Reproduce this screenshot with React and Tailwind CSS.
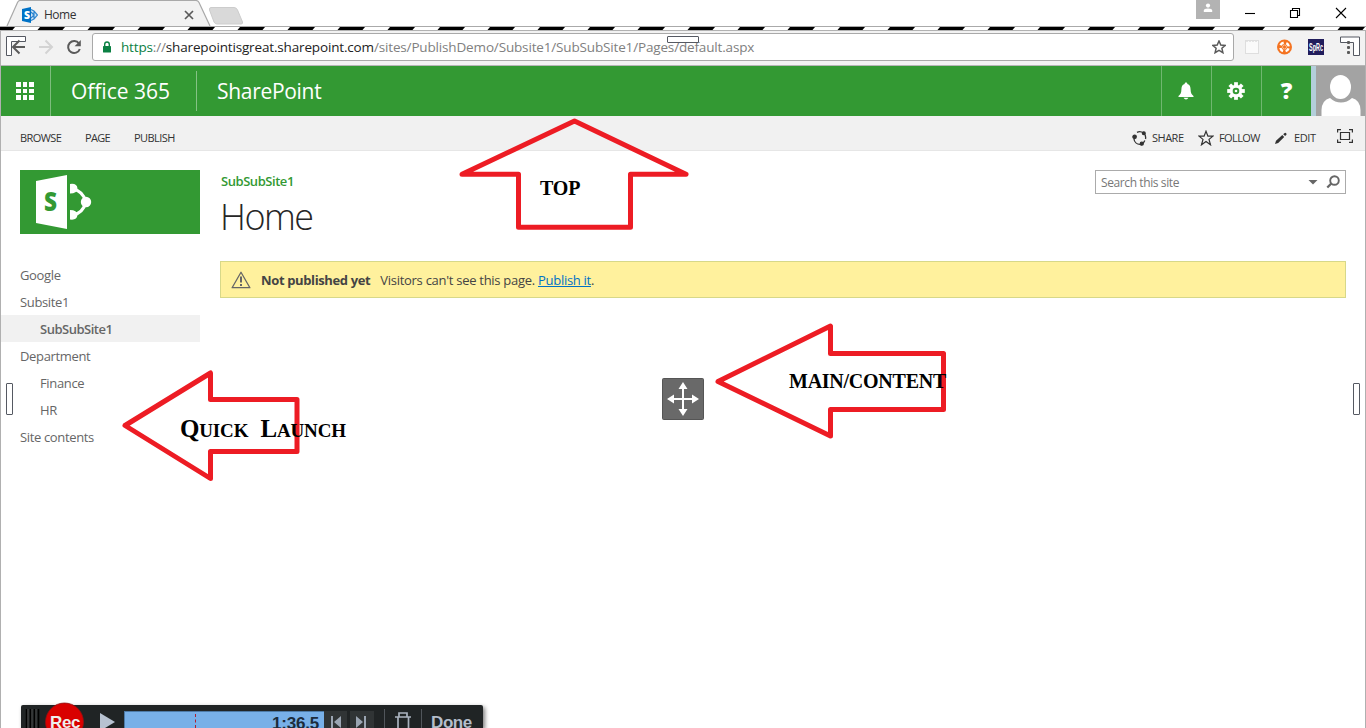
import React from "react";

const SMALLCAPS = "font-['Liberation_Serif',serif] font-bold text-black whitespace-nowrap";

function SharePointFavicon() {
  return (
    <svg className="h-4 w-4 shrink-0" viewBox="0 0 16 16">
      <path d="M8.5 2.5 L15.5 8 L8.5 13.5 Z" fill="#cfe4f5" />
      <path d="M9 2.5 L12 4 L15.5 8 L12 12 L9 13.5 M9 5 L12 8 L9 11 M12 4 V12" stroke="#2f86cf" strokeWidth="1.2" fill="none" />
      <path d="M0 2 L9 0 V16 L0 14 Z" fill="#0072c6" />
      <text x="2" y="12" fontFamily="Open Sans, sans-serif" fontSize="10.5" fontWeight="800" fill="#fff">S</text>
    </svg>
  );
}

function TabStrip() {
  return (
    <div className="relative flex h-[26px] items-start bg-white">
      <svg className="absolute left-0 top-0 h-[26px] w-[250px]" viewBox="0 0 250 26">
        <path d="M7 26 L17.5 2.5 Q18.5 .5 20 .5 H196 Q198 .5 199 2.5 L210 26" fill="#f2f2f2" stroke="#a9a9a9" strokeWidth="1.2" />
        <path d="M211 7.5 H234 Q236.500 7.500 237.500 10 L242.500 22 Q243 24 241 24 H217 Q215 24 214 22 L209.500 10 Q209 7.500 211 7.500Z" fill="#d9d9d9" stroke="#cccccc" strokeWidth="1" />
      </svg>
      <div className="relative flex h-[26px] w-[210px] items-center pl-[22px] pt-[4px]">
        <SharePointFavicon />
        <span className="ml-[6px] text-[12px] leading-4 tracking-[-0.5px] text-[#333]">Home</span>
        <svg className="ml-auto mr-[16px] h-[10px] w-[10px]" viewBox="0 0 10 10">
          <path d="M1 1 L9 9 M9 1 L1 9" stroke="#5a5a5a" strokeWidth="1.7" />
        </svg>
      </div>
      <div className="ml-auto flex items-start">
        <div className="flex h-[19px] w-6 justify-center bg-[#b3b3b3] pt-[3px]">
          <svg className="h-[10px] w-[10px]" viewBox="0 0 10 10" fill="#fff">
            <circle cx="5" cy="2.600" r="2.100" />
            <path d="M.8 9 V7.500 Q.8 5.800 5 5.600 Q9.200 5.800 9.200 7.500 V9Z" />
          </svg>
        </div>
        <svg className="h-[26px] w-[146px]" viewBox="1220 0 146 26" fill="none" stroke="#000" strokeWidth="1.100">
          <path d="M1245 13.5 H1255" />
          <path d="M1290.500 10.500 H1297.500 V17.500 H1290.500Z M1292.500 10.500 V8.500 H1299.500 V15.500 H1297.500" />
          <path d="M1336 8 L1346 18 M1346 8 L1336 18" />
        </svg>
      </div>
    </div>
  );
}

function HazardStripe() {
  return (
    <svg className="block h-[5px] w-full" viewBox="0 0 1366 5">
      <defs>
        <pattern id="hazard" width="50" height="5" patternUnits="userSpaceOnUse" x="37">
          <path d="M0.500 4 L3 1 H28 L25.500 4Z" fill="#000" />
        </pattern>
      </defs>
      <rect width="1366" height="5" fill="#fff" />
      <rect y="0" width="1366" height="1" fill="#aaa" />
      <rect y="4" width="1366" height="1" fill="#b2b2b2" />
      <rect width="1366" height="5" fill="url(#hazard)" />
    </svg>
  );
}

function AddressBar() {
  return (
    <div className="flex h-[35px] items-center border-b border-[#b6b6b6] bg-[#f2f2f2] pb-[3px]">
      <svg className="h-[32px] w-[91px] shrink-0" viewBox="1 31 91 32" fill="none">
        <path d="M6.500 37 Q6.500 36.500 7 36.500 H25.500 V41.500 H11.500 V55.500 H6.500Z" fill="#fff" stroke="#555962" />
        <path d="M25 47 H13 M19.500 40.500 L13 47 L19.500 53.500" stroke="#5a5a5a" strokeWidth="2" />
        <path d="M39 47 H51 M45.500 40.500 L52 47 L45.500 53.500" stroke="#d3d3d3" strokeWidth="2" />
        <path d="M79 43.500 A6 6 0 1 0 79.800 49" stroke="#5a5a5a" strokeWidth="2" />
        <path d="M80.800 40 V46.200 H74.600Z" fill="#5a5a5a" />
      </svg>
      <div className="flex h-[28px] w-[1142px] shrink-0 items-center rounded-[3px] border border-[#a9a9a9] bg-white">
        <svg className="ml-[10px] h-3 w-2 shrink-0" viewBox="0 0 8 12">
          <rect y="5" width="8" height="6.500" rx=".6" fill="#0b8043" />
          <path d="M1.700 5 V3.300 A2.300 2.300 0 0 1 6.300 3.300 V5" fill="none" stroke="#0b8043" strokeWidth="1.400" />
        </svg>
        <div className="ml-[10px] whitespace-nowrap text-[13.5px] leading-5 tracking-[-0.157px] text-[#808080]">
          <span className="text-[#0b8043]">https</span>://
          <span className="text-[#222]">sharepointisgreat.sharepoint.com</span>
          /sites/PublishDemo/Subsite1/SubSubSite1/Pages/default.aspx
        </div>
        <svg className="ml-auto mr-[7px] h-[14px] w-[14px]" viewBox="0 0 14 14">
          <path d="M7 1 L8.800 5 L13.200 5.400 L9.900 8.300 L10.900 12.700 L7 10.400 L3.100 12.700 L4.100 8.300 L.8 5.400 L5.200 5Z" fill="none" stroke="#5a5a5a" strokeWidth="1.500" />
        </svg>
      </div>
      <svg className="h-[32px] w-[131px] shrink-0" viewBox="1234 31 131 32">
        <rect x="1245.500" y="40.500" width="13" height="13" fill="#fafafa" stroke="#dedede" />
        <path d="M1246 41.500 H1258" stroke="#e4e4e4" strokeDasharray="2 1" />
        <circle cx="1284.500" cy="47" r="7.500" fill="#f47321" />
        <circle cx="1284.500" cy="47" r="4.300" fill="none" stroke="#fff" strokeWidth="2.400" strokeDasharray="4 2.754" strokeDashoffset="-1.400" />
        <circle cx="1284.500" cy="47" r="2" fill="none" stroke="#fbd0b4" strokeWidth=".8" />
        <rect x="1308" y="39" width="16" height="16" fill="#211d5c" />
        <text x="1309" y="51" textLength="14" lengthAdjust="spacingAndGlyphs" fontFamily="Liberation Sans, sans-serif" fontSize="10" fontWeight="700" fill="#fff">SpRc</text>
        <path d="M1340.500 37 H1359.500 V55.500 H1353.500 V42.500 H1340.500Z" fill="#fff" stroke="#555962" />
        <g fill="#5a5a5a">
          <rect x="1347" y="41" width="3" height="3" rx="1" />
          <rect x="1347" y="46" width="3" height="3" rx="1" />
          <rect x="1347" y="51" width="3" height="3" rx="1" />
        </g>
      </svg>
    </div>
  );
}

function SuiteBar() {
  return (
    <div className="flex h-[50px] items-center bg-[#339933] text-white">
      <div className="flex h-full w-[50px] items-center justify-center border-r border-[#7dbd7d] pr-px">
        <div className="grid grid-cols-3 gap-[2px]">
          {[0, 1, 2, 3, 4, 5, 6, 7, 8].map((i) => (
            <div key={i} className="h-[4.700px] w-[4.700px] bg-white" />
          ))}
        </div>
      </div>
      <div className="w-[145px] pl-[20px] text-[21px] leading-[50px]">Office 365</div>
      <div className="h-10 w-px bg-[#85c285]" />
      <div className="pl-[20px] text-[21px] leading-[50px] tracking-[-0.3px]">SharePoint</div>
      <div className="ml-auto flex h-full">
        <div className="flex w-[50px] items-center justify-center border-l border-[#70b770] pr-px">
          <svg className="h-[18px] w-4" viewBox="0 0 16 18" fill="#fff">
            <path d="M8 .5 C9 .5 9.400 1.200 9.400 2 C12 2.800 12.500 5 12.600 7.500 C12.700 11 13.500 12.500 15.500 14 V15 H.5 V14 C2.500 12.500 3.300 11 3.400 7.500 C3.500 5 4 2.800 6.600 2 C6.600 1.200 7 .5 8 .5Z" />
            <path d="M5.500 15.700 H10.500 Q9.500 17.500 8 17.500 Q6.500 17.500 5.500 15.700Z" />
          </svg>
        </div>
        <div className="flex w-[50px] items-center justify-center border-l border-[#70b770] pr-px">
          <svg className="h-[18px] w-[18px]" viewBox="-9 -9 18 18">
            {[0, 45, 90, 135].map((a) => (
              <rect key={a} x="-1.900" y="-8.800" width="3.800" height="17.600" fill="#fff" transform={`rotate(${a})`} />
            ))}
            <circle r="6.300" fill="#fff" />
            <circle r="3.300" fill="#339933" />
            <circle r="1.300" fill="#fff" />
          </svg>
        </div>
        <div className="flex w-[50px] items-center justify-center border-l border-[#70b770] pb-[2px] font-['Open_Sans',sans-serif] text-[23px] font-extrabold">?</div>
        <div className="w-[5px] bg-[#b3cfdb]" />
        <svg className="h-[50px] w-[49px] bg-[#a3a3a3]" viewBox="0 0 49 50">
          <ellipse cx="24.500" cy="21" rx="10.500" ry="12" fill="#fff" />
          <path d="M5.500 50 V44 Q6 34 14 32 Q19 36.500 25 36.500 Q31 36.500 36 32 Q44 34 44.500 44 V50Z" fill="#fff" />
        </svg>
      </div>
    </div>
  );
}

function RibbonRow() {
  return (
    <div className="flex h-[35px] items-center border-b border-[#e6e6e6] bg-[#f1f1f1] pl-[19px] pt-[9px] text-[11px] leading-4 text-[#333]">
      <span className="w-[65px] tracking-[-0.6px]">BROWSE</span>
      <span className="w-[49px] tracking-[-0.65px]">PAGE</span>
      <span className="tracking-[-0.55px]">PUBLISH</span>
      <div className="ml-auto flex items-center">
        <svg className="h-4 w-[15px]" viewBox="0 0 15 16" fill="none" stroke="#333" strokeWidth="1.300">
          <path d="M5 2.300 A6 6 0 0 1 13.500 9 M12.800 10.500 A6 6 0 0 1 10 13.700 M8 14.400 A6 6 0 0 1 2 9" />
          <circle cx="2.600" cy="6.800" r="1.700" fill="#333" />
          <circle cx="11.800" cy="3.200" r="1.400" fill="#333" />
          <circle cx="9.800" cy="13.700" r="1.500" fill="#333" />
        </svg>
        <span className="ml-[5px] w-[46px] tracking-[-0.5px]">SHARE</span>
        <svg className="h-4 w-4" viewBox="0 0 16 16">
          <path d="M8 1.200 L9.900 6.100 H15 L11 9.400 L12.500 14.800 L8 11.600 L3.500 14.800 L5 9.400 L1 6.100 H6.100Z" fill="none" stroke="#333" strokeWidth="1.200" />
        </svg>
        <span className="ml-[5px] w-[56px] tracking-[-0.6px]">FOLLOW</span>
        <svg className="h-3 w-3" viewBox="0 0 12 12" fill="#333">
          <path d="M0 12 L1 8.800 L7.300 3 L9.200 4.900 L3.200 11Z M8.200 2.200 L9.300 1.200 Q10.300 .4 11.200 1.200 Q12 2.200 11.200 3.100 L10.100 4Z" />
        </svg>
        <span className="ml-[7px] w-[43px] tracking-[-0.4px]">EDIT</span>
        <svg className="mr-[12px] mt-[-3px] h-[14px] w-4" viewBox="0 0 16 14" fill="none" stroke="#333" strokeWidth="1.200">
          <path d="M3.500 3.500 H12.500 V10.500 H3.500Z M.6 3.500 V.6 H4 M12 .6 H15.400 V3.500 M15.400 10.500 V13.400 H12 M4 13.400 H.6 V10.500" />
        </svg>
      </div>
    </div>
  );
}

function SiteLogo() {
  return (
    <div className="h-16 w-[180px] bg-[#339933]">
      <svg className="h-16 w-[80px]" viewBox="0 0 80 64">
        <path d="M16 11 L47 5 V59 L16 53Z" fill="#fff" />
        <text x="24" y="41" fontFamily="Open Sans, sans-serif" fontSize="26" fontWeight="800" fill="#339933" textLength="13" lengthAdjust="spacingAndGlyphs">S</text>
        <path d="M53 19 Q63 21 66 32 Q63 43 53 45" fill="none" stroke="#fff" strokeWidth="3" />
        <path d="M50 14 Q57 13 57.500 18.500 Q57 23.500 50 23.500Z M50 40 Q57 40 57.500 45 Q57 50.500 50 49.500Z" fill="#fff" />
        <circle cx="66" cy="32" r="5.200" fill="#fff" />
      </svg>
    </div>
  );
}

const NAV = [
  { label: "Google" },
  { label: "Subsite1" },
  { label: "SubSubSite1", child: true, selected: true },
  { label: "Department" },
  { label: "Finance", child: true },
  { label: "HR", child: true },
  { label: "Site contents" },
];

function QuickLaunch() {
  return (
    <aside className="w-[199px] shrink-0 pt-[19px]">
      <div className="pl-[19px]">
        <SiteLogo />
      </div>
      <nav className="mt-[27px] text-[13px] text-[#666]">
        {NAV.map((item) => (
          <div
            key={item.label}
            className={`h-[27px] leading-[28px] ${item.child ? "pl-[39px]" : "pl-[19px]"} ${
              item.selected ? "bg-[#f1f1f1] font-semibold tracking-[-0.5px]" : "tracking-[-0.35px]"
            }`}
          >
            {item.label}
          </div>
        ))}
      </nav>
    </aside>
  );
}

function MainContent() {
  return (
    <main className="flex-1 pl-[20px] pr-[19px]">
      <div className="flex h-[110px] justify-between">
        <div>
          <div className="pl-px pt-[20px] text-[13px] font-semibold leading-5 tracking-[-0.45px] text-[#339933]">SubSubSite1</div>
          <h1 className="mt-[2px] text-[36px] font-light leading-[48px] tracking-[-1.500px] text-[#262626]">Home</h1>
        </div>
        <div className="mt-[19px] flex h-[24px] w-[251px] items-center border border-[#ababab] bg-white pl-[5px] text-[12px] tracking-[-0.45px] text-[#777]">
          <span className="pt-[2px] tracking-[-0.400px]">Search this site</span>
          <svg className="ml-auto mr-[4px] h-4 w-[33px]" viewBox="0 0 33 16">
            <path d="M0.500 6 H9.500 L5 10.500Z" fill="#666" />
            <circle cx="26.500" cy="6.500" r="4.300" fill="none" stroke="#666" strokeWidth="1.900" />
            <path d="M23.300 9.500 L19.300 13.500" stroke="#666" strokeWidth="2.300" />
          </svg>
        </div>
      </div>
      <div className="flex h-[37px] items-center border border-[#d7d889] bg-[#fff19d] pl-[10px] text-[13px] text-[#444]">
        <svg className="h-[18px] w-5" viewBox="0 0 20 18" fill="none" stroke="#666">
          <path d="M10 1.200 L18.900 16.700 H1.100Z" strokeWidth="1.300" strokeLinejoin="round" />
          <path d="M10 5.500 V11.500 M10 13 V15" strokeWidth="2" />
        </svg>
        <span className="ml-[10px] pt-[2px] font-bold tracking-[-0.37px]">Not published yet</span>
        <span className="ml-[10px] pt-[2px] tracking-[-0.280px]">
          Visitors can't see this page. <a className="text-[#0072c6] underline">Publish it</a>.
        </span>
      </div>
    </main>
  );
}

function Annotations() {
  return (
    <div className="pointer-events-none absolute inset-0">
      <svg className="absolute inset-0 h-full w-full" viewBox="0 0 1366 728" fill="none">
        <g stroke="#ed1c24" strokeWidth="5" strokeLinejoin="round">
          <path d="M574.500 121 L686 174.300 H630.500 V227.300 H518.500 V174.300 H462Z" />
          <path d="M125 425.500 L210.500 373 V399.500 H297 V451.500 H210.500 V478.500Z" />
          <path d="M718 381.500 L830.500 326 V353.500 H943.500 V409.500 H830.500 V436Z" />
        </g>
        <g fill="#fff" stroke="#555962">
          <rect x="667.500" y="36.500" width="31" height="6" rx=".5" fillOpacity=".7" />
          <rect x="6.500" y="383.500" width="6" height="31" rx=".5" />
          <rect x="1353.500" y="383.500" width="6" height="31" rx=".5" />
        </g>
        <rect x="662.500" y="378.500" width="41" height="41" rx="1" fill="#696969" stroke="#555" />
        <path d="M683 387 V411 M671 399 H695" stroke="#fff" strokeWidth="2" />
        <path d="M683 382 L687.500 389 H678.500Z M683 416 L687.500 409 H678.500Z M667 399 L674 394.500 V403.500Z M699 399 L692 394.500 V403.500Z" fill="#fff" />
      </svg>
      <div className={`absolute left-[540px] top-[177px] text-[20px] leading-[22px] tracking-[-0.2px] ${SMALLCAPS}`}>TOP</div>
      <div className={`absolute left-[180px] top-[415px] text-[25px] leading-[28px] tracking-[-0.15px] [word-spacing:6px] ${SMALLCAPS}`}>
        Q<span className="text-[19px]">UICK</span> L<span className="text-[19px]">AUNCH</span>
      </div>
      <div className={`absolute left-[789px] top-[368px] text-[20px] leading-[26px] tracking-[-0.25px] ${SMALLCAPS}`}>MAIN/CONTENT</div>
    </div>
  );
}

function RecorderBar() {
  return (
    <div className="absolute bottom-0 left-[21px] flex h-[23px] w-[462px] items-start overflow-visible rounded-t-[2px] bg-[#202425] font-['Liberation_Sans',sans-serif] shadow-[2px_2px_4px_rgba(0,0,0,0.5)]">
      <svg className="absolute bottom-0 left-0 h-[26px] w-[103px]" viewBox="21 702 103 26">
        <path d="M26.500 709 V728 M30.500 709 V728 M34.500 709 V728 M38.500 709 V728" stroke="#000" strokeWidth="1.500" />
        <path d="M28 709 V728 M32 709 V728 M36 709 V728" stroke="#555" strokeWidth=".8" />
        <circle cx="64.500" cy="722" r="19" fill="#d90000" stroke="#8f1010" strokeWidth=".8" />
        <path d="M100 713 L115 722 L100 731Z" fill="#b7c2d1" />
      </svg>
      <div className="relative ml-[29px] h-[23px] w-[32px] pt-[8px] text-[17px] font-bold leading-5 tracking-[-0.4px] text-[#eee]">Rec</div>
      <div className="ml-[42px] mt-[6px] flex h-[17px] w-[200px] border-l border-t border-[#4d7ba8] bg-[#78b0e8]">
        <div className="ml-[70px] mt-[2px] h-[14px] border-l border-dashed border-[#b02030]" />
        <div className="ml-auto mr-[5px] mt-[2px] text-[17px] font-bold leading-5 tracking-[-0.2px] text-[#1c2c3c]">1:36.5</div>
      </div>
      <svg className="h-[23px] w-[98px]" viewBox="324 705 98 23">
        <path d="M324 711 H347 V728 H324Z M350 711 H374 V728 H350Z" fill="#303435" />
        <path d="M332 716 V728 M365 716 V728" stroke="#9ba5b2" strokeWidth="2" />
        <path d="M341 716 V728 L334 722Z M356 716 V728 L363 722Z" fill="#9ba5b2" />
        <path d="M384.500 709 V728 M421.500 709 V728" stroke="#51565b" />
        <path d="M395 717 H411 M399 717 V713 H407 V717 M398 717 V729 M408.500 717 V729" fill="none" stroke="#aab3bf" strokeWidth="1.700" />
      </svg>
      <div className="ml-[9px] h-[23px] pt-[8px] text-[17px] font-bold leading-5 tracking-[-0.4px] text-[#b4bdca]">Done</div>
    </div>
  );
}

export default function App() {
  return (
    <div className="relative flex h-[728px] w-[1366px] flex-col overflow-hidden bg-white font-['Open_Sans','Noto_Sans',sans-serif]">
      <TabStrip />
      <HazardStripe />
      <div className="flex flex-1 flex-col border-x border-[#b0b0b0]">
        <AddressBar />
        <SuiteBar />
        <RibbonRow />
        <div className="flex flex-1">
          <QuickLaunch />
          <MainContent />
        </div>
      </div>
      <Annotations />
      <RecorderBar />
    </div>
  );
}
